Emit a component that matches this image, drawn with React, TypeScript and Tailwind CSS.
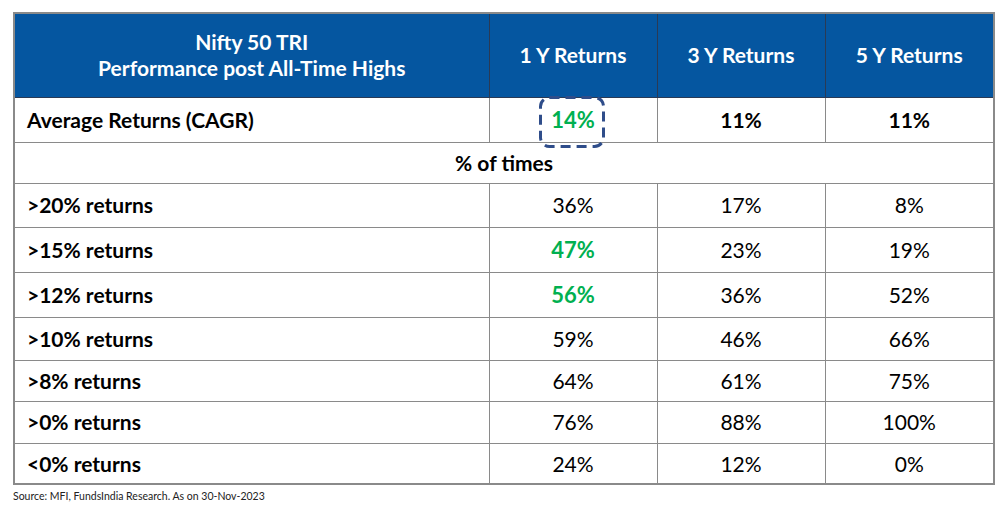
const rows = [
  { label: '>20% returns', y1: '36%', y3: '17%', y5: '8%', h: 'h-[44px]' },
  { label: '>15% returns', y1: '47%', y3: '23%', y5: '19%', h: 'h-[45px]', hi: true },
  { label: '>12% returns', y1: '56%', y3: '36%', y5: '52%', h: 'h-[45px]', hi: true },
  { label: '>10% returns', y1: '59%', y3: '46%', y5: '66%', h: 'h-[43px]' },
  { label: '>8% returns', y1: '64%', y3: '61%', y5: '75%', h: 'h-[41px]' },
  { label: '>0% returns', y1: '76%', y3: '88%', y5: '100%', h: 'h-[42px]' },
  { label: '<0% returns', y1: '24%', y3: '12%', y5: '0%', h: 'h-[41px]' },
]

export default function App() {
  return (
    <div className="w-[1003px] h-[511px] bg-white pt-[12px] pl-[13px] font-['Lato','Noto_Sans',sans-serif] text-black">
      <table className="w-[980px] border-collapse table-fixed border-2 border-[#8a8a8a]">
        <colgroup>
          <col className="w-[475px]" />
          <col className="w-[168px]" />
          <col className="w-[168px]" />
          <col className="w-[169px]" />
        </colgroup>
        <thead>
          <tr className="h-[84px] bg-[#0556a0] text-white font-bold text-[21px] leading-[26px]">
            <th className="border border-[#2a3a55] font-bold">
              Nifty 50 TRI
              <br />
              Performance post All-Time Highs
            </th>
            <th className="border border-[#2a3a55] font-bold">1 Y Returns</th>
            <th className="border border-[#2a3a55] font-bold">3 Y Returns</th>
            <th className="border border-[#2a3a55] font-bold">5 Y Returns</th>
          </tr>
        </thead>
        <tbody className="text-[21px]">
          <tr className="h-[45px] font-bold">
            <td className="border border-[#8a8a8a] pl-[12px]">Average Returns (CAGR)</td>
            <td className="border border-[#8a8a8a] text-center relative">
              <span className="text-[#00b050] text-[22px]">14%</span>
              {/* highlight box */}
              <svg className="absolute left-[49px] top-[-2px]" width="66" height="52" viewBox="0 0 66 52">
                <rect x="1.5" y="1.5" width="63" height="49" rx="9" fill="none" stroke="#2f4d8a" strokeWidth="3" strokeDasharray="10 6" />
              </svg>
            </td>
            <td className="border border-[#8a8a8a] text-center">11%</td>
            <td className="border border-[#8a8a8a] text-center">11%</td>
          </tr>
          <tr className="h-[41px] font-bold">
            <td colSpan={4} className="border border-[#8a8a8a] text-center">% of times</td>
          </tr>
          {rows.map((r) => (
            <tr key={r.label} className={r.h}>
              <td className="border border-[#8a8a8a] pl-[12px] font-bold">{r.label}</td>
              <td className={`border border-[#8a8a8a] text-center ${r.hi ? 'font-bold text-[#00b050] text-[22px]' : ''}`}>{r.y1}</td>
              <td className="border border-[#8a8a8a] text-center">{r.y3}</td>
              <td className="border border-[#8a8a8a] text-center">{r.y5}</td>
            </tr>
          ))}
        </tbody>
      </table>
      <p className="mt-[4px] text-[10.5px] text-[#222]">Source: MFI, FundsIndia Research. As on 30-Nov-2023</p>
    </div>
  )
}
